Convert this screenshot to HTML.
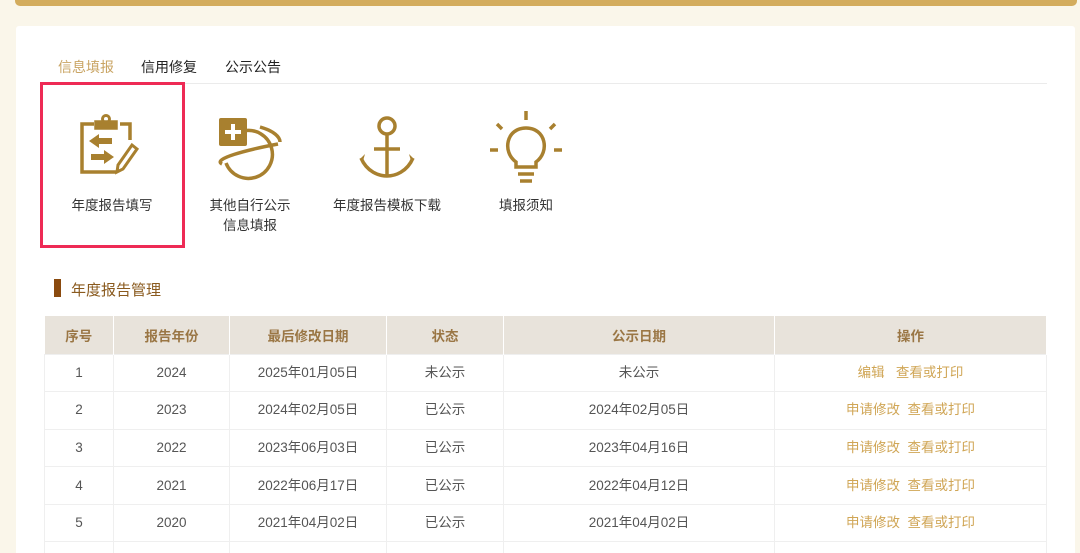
<!DOCTYPE html>
<html><head><meta charset="utf-8"><style>
*{margin:0;padding:0;box-sizing:border-box}
html,body{width:1080px;height:553px;overflow:hidden}
body{background:#faf6ea;position:relative;font-family:"Liberation Sans","Noto Sans CJK SC",sans-serif;}
.topbar{position:absolute;left:15px;top:-6px;width:1062px;height:12px;background:#d3ac5d;border-radius:5px}
.panel{position:absolute;left:16px;top:26px;width:1059px;height:540px;background:#fff;border-radius:3px}
.tab{position:absolute;top:57px;font-size:14px;color:#222}
.line{position:absolute;left:44px;top:83px;width:1003px;height:1px;background:#ebebeb}
.red{position:absolute;left:40px;top:82px;width:145px;height:166px;border:3px solid #ee2a55}
.lbl{position:absolute;font-size:13.5px;color:#333;text-align:center;line-height:20px}
.title{position:absolute;left:54px;top:279px;font-size:15px;color:#8a5a1e}
.title:before{content:"";position:absolute;left:0;top:0;width:7px;height:18px;background:#8a4a0e}
table{position:absolute;left:44px;top:316px;width:1003px;border-collapse:collapse;font-size:13.5px;color:#555}
th{background:#e8e3db;color:#9a7644;height:38px;font-weight:bold;border-right:1px solid #fff}
td{height:37.6px;text-align:center;vertical-align:middle;border:1px solid #efefef;line-height:18px}
td.op{color:#d0a656}
</style></head><body>
<div class="topbar"></div>
<div class="panel"></div>
<div class="tab" style="left:58px;color:#c9a463">信息填报</div>
<div class="tab" style="left:141px">信用修复</div>
<div class="tab" style="left:225px">公示公告</div>
<div class="line"></div>
<div class="red"></div>
<svg style="position:absolute;left:0;top:0" width="1080" height="260">
<g fill="none" stroke="#a8802f" stroke-width="3.5">
<!-- clipboard -->
<path d="M94 124h-12v48h34"/>
<path d="M120 124h10v16"/>
<path d="M96 128h20v-6h-20z" fill="#a8802f"/>
<circle cx="106" cy="119" r="3.5" stroke-width="3"/>
<path d="M118 165l14-20 5 4-14 20-6 3z" stroke-width="3"/>
<!-- globe -->
<path d="M243 131a24 24 0 1 1-17 32"/>
<path d="M222 164c-10-5 24-14 56-20M260 127c14 4 20 10 20 15"/>
<!-- anchor -->
<circle cx="387" cy="126" r="8"/>
<path d="M387 134v42M374 149h26M361 158c6 14 18 18 26 18s20-4 26-18"/>
<!-- bulb -->
<path d="M516 162c-14-10-10-34 10-34s24 24 10 34v5h-20z"/>
<path d="M518 174h16M520 181h12M526 111v9M497 124l5 5M555 124l-5 5M490 150h8M554 150h8"/>
</g>
<g fill="#a8802f">
<path d="M89 141l10-7v4h13v6h-13v4z"/>
<path d="M114 157l-10 7v-4h-13v-6h13v-4z"/>
<rect x="219" y="118" width="28" height="28" rx="2"/>
<path d="M365 154l-5 5 3 2zM409 154l5 5-3 2z"/>
</g>
<path d="M233 124v16M225 132h16" stroke="#fff" stroke-width="4"/>
</svg>
<div class="lbl" style="left:60px;top:196px;width:104px">年度报告填写</div>
<div class="lbl" style="left:200px;top:196px;width:100px">其他自行公示<br>信息填报</div>
<div class="lbl" style="left:327px;top:196px;width:120px">年度报告模板下载</div>
<div class="lbl" style="left:486px;top:196px;width:80px">填报须知</div>
<div class="title"><span style="margin-left:17px">年度报告管理</span></div>
<table>
<tr><th style="width:69px">序号</th><th style="width:116px">报告年份</th><th style="width:157px">最后修改日期</th><th style="width:117px">状态</th><th style="width:271px">公示日期</th><th>操作</th></tr>
<tr><td>1</td><td>2024</td><td>2025年01月05日</td><td>未公示</td><td>未公示</td><td class="op">编辑&nbsp;&nbsp; 查看或打印</td></tr>
<tr><td>2</td><td>2023</td><td>2024年02月05日</td><td>已公示</td><td>2024年02月05日</td><td class="op">申请修改&nbsp; 查看或打印</td></tr>
<tr><td>3</td><td>2022</td><td>2023年06月03日</td><td>已公示</td><td>2023年04月16日</td><td class="op">申请修改&nbsp; 查看或打印</td></tr>
<tr><td>4</td><td>2021</td><td>2022年06月17日</td><td>已公示</td><td>2022年04月12日</td><td class="op">申请修改&nbsp; 查看或打印</td></tr>
<tr><td>5</td><td>2020</td><td>2021年04月02日</td><td>已公示</td><td>2021年04月02日</td><td class="op">申请修改&nbsp; 查看或打印</td></tr>
<tr><td></td><td></td><td></td><td></td><td></td><td></td></tr>
</table>
</body></html>
